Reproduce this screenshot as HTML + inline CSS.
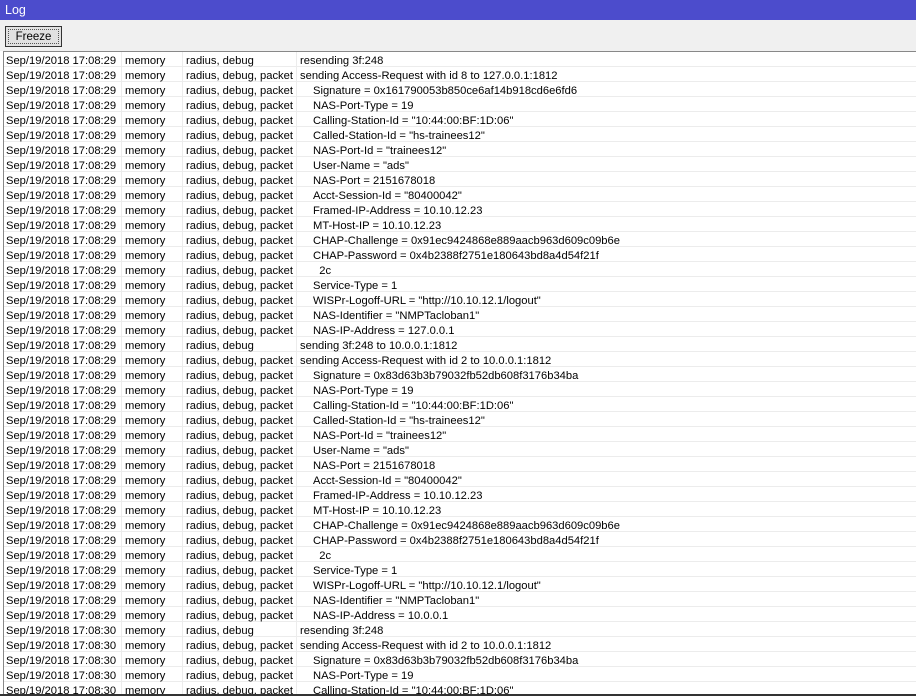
<!DOCTYPE html>
<html><head><meta charset="utf-8"><style>
*{margin:0;padding:0;box-sizing:border-box}
body{width:916px;height:696px;overflow:hidden;background:#fff;font-family:"Liberation Sans",sans-serif;font-size:11.2px;color:#000;position:relative}
#title{position:absolute;left:0;top:0;width:916px;height:20px;background:#4c4ccc;color:#fff;font-size:12.5px;padding:3px 0 0 5px}
#bar{position:absolute;left:0;top:20px;width:916px;height:31px;background:#f0f0f0}
#btn{position:absolute;left:5px;top:26px;width:57px;height:21px;border:1px solid #333;background:#e1e1e1;font-size:11.5px}
#btn i{position:absolute;left:2px;top:2px;right:2px;bottom:2px;border:1px dotted #555}
#btn b{position:absolute;left:0;right:0;top:3px;text-align:center;font-weight:normal;line-height:14px}
#tbl{position:absolute;left:3px;top:51px;width:913px;height:645px;border-top:1px solid #888;border-left:1px solid #888;overflow:hidden}
.r{height:15px;line-height:14px;border-bottom:1px solid #ececec;white-space:nowrap;position:relative}
.r span{position:absolute;top:2px}
.a{left:2px}.b{left:121px}.c{left:182px}.d{left:296px}
.i{padding-left:13px}
.v{position:absolute;top:0;bottom:0;width:1px;background:#ececec}
#bot{position:absolute;left:0;top:694px;width:916px;height:2px;background:#333}
</style></head><body>
<div id="title">Log</div>
<div id="bar"></div>
<div id="btn"><i></i><b>Freeze</b></div>
<div id="tbl">
<div class="v" style="left:117px"></div><div class="v" style="left:178px"></div><div class="v" style="left:292px"></div>
<div class="r"><span class="a">Sep/19/2018 17:08:29</span><span class="b">memory</span><span class="c">radius, debug</span><span class="d">resending 3f:248</span></div>
<div class="r"><span class="a">Sep/19/2018 17:08:29</span><span class="b">memory</span><span class="c">radius, debug, packet</span><span class="d">sending Access-Request with id 8 to 127.0.0.1:1812</span></div>
<div class="r"><span class="a">Sep/19/2018 17:08:29</span><span class="b">memory</span><span class="c">radius, debug, packet</span><span class="d i">Signature = 0x161790053b850ce6af14b918cd6e6fd6</span></div>
<div class="r"><span class="a">Sep/19/2018 17:08:29</span><span class="b">memory</span><span class="c">radius, debug, packet</span><span class="d i">NAS-Port-Type = 19</span></div>
<div class="r"><span class="a">Sep/19/2018 17:08:29</span><span class="b">memory</span><span class="c">radius, debug, packet</span><span class="d i">Calling-Station-Id = "10:44:00:BF:1D:06"</span></div>
<div class="r"><span class="a">Sep/19/2018 17:08:29</span><span class="b">memory</span><span class="c">radius, debug, packet</span><span class="d i">Called-Station-Id = "hs-trainees12"</span></div>
<div class="r"><span class="a">Sep/19/2018 17:08:29</span><span class="b">memory</span><span class="c">radius, debug, packet</span><span class="d i">NAS-Port-Id = "trainees12"</span></div>
<div class="r"><span class="a">Sep/19/2018 17:08:29</span><span class="b">memory</span><span class="c">radius, debug, packet</span><span class="d i">User-Name = "ads"</span></div>
<div class="r"><span class="a">Sep/19/2018 17:08:29</span><span class="b">memory</span><span class="c">radius, debug, packet</span><span class="d i">NAS-Port = 2151678018</span></div>
<div class="r"><span class="a">Sep/19/2018 17:08:29</span><span class="b">memory</span><span class="c">radius, debug, packet</span><span class="d i">Acct-Session-Id = "80400042"</span></div>
<div class="r"><span class="a">Sep/19/2018 17:08:29</span><span class="b">memory</span><span class="c">radius, debug, packet</span><span class="d i">Framed-IP-Address = 10.10.12.23</span></div>
<div class="r"><span class="a">Sep/19/2018 17:08:29</span><span class="b">memory</span><span class="c">radius, debug, packet</span><span class="d i">MT-Host-IP = 10.10.12.23</span></div>
<div class="r"><span class="a">Sep/19/2018 17:08:29</span><span class="b">memory</span><span class="c">radius, debug, packet</span><span class="d i">CHAP-Challenge = 0x91ec9424868e889aacb963d609c09b6e</span></div>
<div class="r"><span class="a">Sep/19/2018 17:08:29</span><span class="b">memory</span><span class="c">radius, debug, packet</span><span class="d i">CHAP-Password = 0x4b2388f2751e180643bd8a4d54f21f</span></div>
<div class="r"><span class="a">Sep/19/2018 17:08:29</span><span class="b">memory</span><span class="c">radius, debug, packet</span><span class="d i">&nbsp;&nbsp;2c</span></div>
<div class="r"><span class="a">Sep/19/2018 17:08:29</span><span class="b">memory</span><span class="c">radius, debug, packet</span><span class="d i">Service-Type = 1</span></div>
<div class="r"><span class="a">Sep/19/2018 17:08:29</span><span class="b">memory</span><span class="c">radius, debug, packet</span><span class="d i">WISPr-Logoff-URL = "http://10.10.12.1/logout"</span></div>
<div class="r"><span class="a">Sep/19/2018 17:08:29</span><span class="b">memory</span><span class="c">radius, debug, packet</span><span class="d i">NAS-Identifier = "NMPTacloban1"</span></div>
<div class="r"><span class="a">Sep/19/2018 17:08:29</span><span class="b">memory</span><span class="c">radius, debug, packet</span><span class="d i">NAS-IP-Address = 127.0.0.1</span></div>
<div class="r"><span class="a">Sep/19/2018 17:08:29</span><span class="b">memory</span><span class="c">radius, debug</span><span class="d">sending 3f:248 to 10.0.0.1:1812</span></div>
<div class="r"><span class="a">Sep/19/2018 17:08:29</span><span class="b">memory</span><span class="c">radius, debug, packet</span><span class="d">sending Access-Request with id 2 to 10.0.0.1:1812</span></div>
<div class="r"><span class="a">Sep/19/2018 17:08:29</span><span class="b">memory</span><span class="c">radius, debug, packet</span><span class="d i">Signature = 0x83d63b3b79032fb52db608f3176b34ba</span></div>
<div class="r"><span class="a">Sep/19/2018 17:08:29</span><span class="b">memory</span><span class="c">radius, debug, packet</span><span class="d i">NAS-Port-Type = 19</span></div>
<div class="r"><span class="a">Sep/19/2018 17:08:29</span><span class="b">memory</span><span class="c">radius, debug, packet</span><span class="d i">Calling-Station-Id = "10:44:00:BF:1D:06"</span></div>
<div class="r"><span class="a">Sep/19/2018 17:08:29</span><span class="b">memory</span><span class="c">radius, debug, packet</span><span class="d i">Called-Station-Id = "hs-trainees12"</span></div>
<div class="r"><span class="a">Sep/19/2018 17:08:29</span><span class="b">memory</span><span class="c">radius, debug, packet</span><span class="d i">NAS-Port-Id = "trainees12"</span></div>
<div class="r"><span class="a">Sep/19/2018 17:08:29</span><span class="b">memory</span><span class="c">radius, debug, packet</span><span class="d i">User-Name = "ads"</span></div>
<div class="r"><span class="a">Sep/19/2018 17:08:29</span><span class="b">memory</span><span class="c">radius, debug, packet</span><span class="d i">NAS-Port = 2151678018</span></div>
<div class="r"><span class="a">Sep/19/2018 17:08:29</span><span class="b">memory</span><span class="c">radius, debug, packet</span><span class="d i">Acct-Session-Id = "80400042"</span></div>
<div class="r"><span class="a">Sep/19/2018 17:08:29</span><span class="b">memory</span><span class="c">radius, debug, packet</span><span class="d i">Framed-IP-Address = 10.10.12.23</span></div>
<div class="r"><span class="a">Sep/19/2018 17:08:29</span><span class="b">memory</span><span class="c">radius, debug, packet</span><span class="d i">MT-Host-IP = 10.10.12.23</span></div>
<div class="r"><span class="a">Sep/19/2018 17:08:29</span><span class="b">memory</span><span class="c">radius, debug, packet</span><span class="d i">CHAP-Challenge = 0x91ec9424868e889aacb963d609c09b6e</span></div>
<div class="r"><span class="a">Sep/19/2018 17:08:29</span><span class="b">memory</span><span class="c">radius, debug, packet</span><span class="d i">CHAP-Password = 0x4b2388f2751e180643bd8a4d54f21f</span></div>
<div class="r"><span class="a">Sep/19/2018 17:08:29</span><span class="b">memory</span><span class="c">radius, debug, packet</span><span class="d i">&nbsp;&nbsp;2c</span></div>
<div class="r"><span class="a">Sep/19/2018 17:08:29</span><span class="b">memory</span><span class="c">radius, debug, packet</span><span class="d i">Service-Type = 1</span></div>
<div class="r"><span class="a">Sep/19/2018 17:08:29</span><span class="b">memory</span><span class="c">radius, debug, packet</span><span class="d i">WISPr-Logoff-URL = "http://10.10.12.1/logout"</span></div>
<div class="r"><span class="a">Sep/19/2018 17:08:29</span><span class="b">memory</span><span class="c">radius, debug, packet</span><span class="d i">NAS-Identifier = "NMPTacloban1"</span></div>
<div class="r"><span class="a">Sep/19/2018 17:08:29</span><span class="b">memory</span><span class="c">radius, debug, packet</span><span class="d i">NAS-IP-Address = 10.0.0.1</span></div>
<div class="r"><span class="a">Sep/19/2018 17:08:30</span><span class="b">memory</span><span class="c">radius, debug</span><span class="d">resending 3f:248</span></div>
<div class="r"><span class="a">Sep/19/2018 17:08:30</span><span class="b">memory</span><span class="c">radius, debug, packet</span><span class="d">sending Access-Request with id 2 to 10.0.0.1:1812</span></div>
<div class="r"><span class="a">Sep/19/2018 17:08:30</span><span class="b">memory</span><span class="c">radius, debug, packet</span><span class="d i">Signature = 0x83d63b3b79032fb52db608f3176b34ba</span></div>
<div class="r"><span class="a">Sep/19/2018 17:08:30</span><span class="b">memory</span><span class="c">radius, debug, packet</span><span class="d i">NAS-Port-Type = 19</span></div>
<div class="r"><span class="a">Sep/19/2018 17:08:30</span><span class="b">memory</span><span class="c">radius, debug, packet</span><span class="d i">Calling-Station-Id = "10:44:00:BF:1D:06"</span></div>
</div>
<div id="bot"></div>
</body></html>
